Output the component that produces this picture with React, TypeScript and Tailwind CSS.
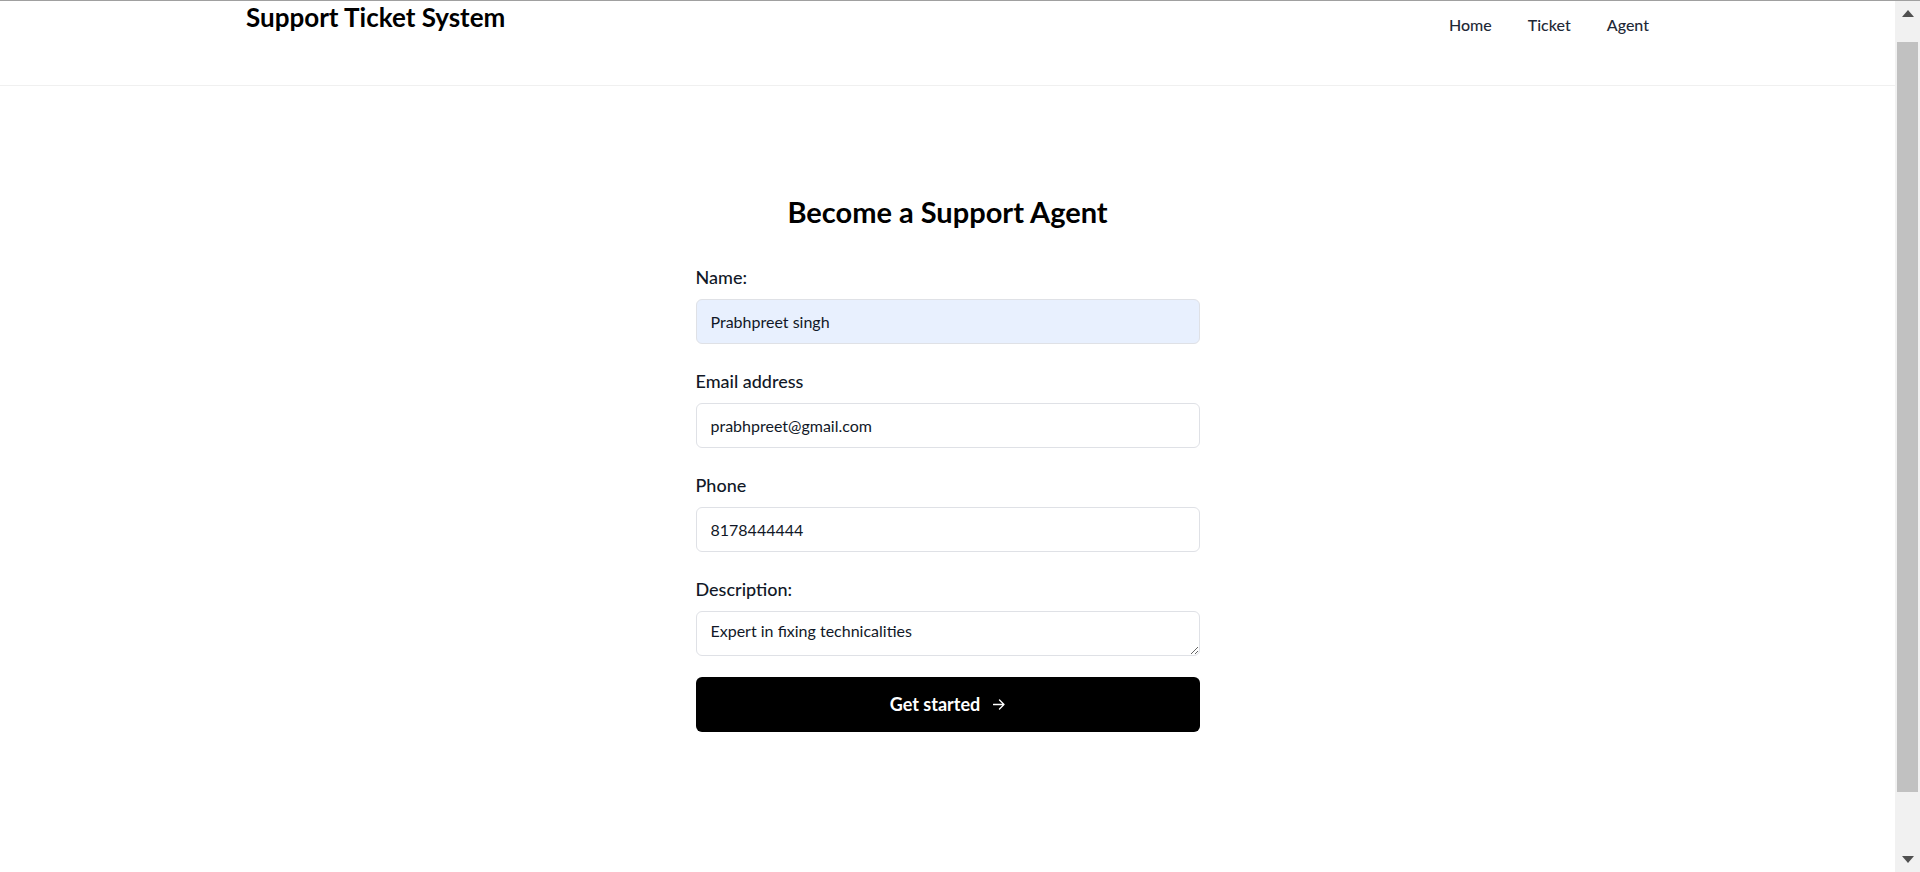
import React from "react";

function Field({
  label,
  value,
  autofill,
}: {
  label: string;
  value: string;
  autofill?: boolean;
}) {
  return (
    <div className="flex flex-col">
      <label className="mb-2 text-[18px] leading-[28px] font-medium text-[#111827]">
        {label}
      </label>
      <input
        readOnly
        defaultValue={value}
        className={`h-[45px] w-full rounded-md border border-[#dfe1e6] px-[14px] text-[16px] leading-6 text-[#111827] outline-none ${
          autofill ? "bg-[#e8f0fe]" : "bg-white"
        }`}
      />
    </div>
  );
}

function Scrollbar() {
  return (
    <div className="flex w-[25px] shrink-0 flex-col items-center bg-[#f1f1f1]">
      <div className="flex h-[25px] w-full items-center justify-center">
        <svg width="12" height="7" viewBox="0 0 12 7">
          <polygon points="6,0 12,7 0,7" fill="#505050" />
        </svg>
      </div>
      <div className="mt-[16px] h-[750px] w-[21px] bg-[#c1c1c1]" />
      <div className="flex-1" />
      <div className="flex h-[25px] w-full items-center justify-center">
        <svg width="12" height="7" viewBox="0 0 12 7">
          <polygon points="0,0 12,0 6,7" fill="#505050" />
        </svg>
      </div>
    </div>
  );
}

export default function App() {
  return (
    <div className="flex h-[872px] w-full flex-col overflow-hidden bg-white font-['Lato','Noto_Sans',sans-serif]">
      <div className="h-px w-full shrink-0 bg-[#a0a0a0]" />
      <div className="flex min-h-0 flex-1">
        <div className="flex min-w-0 flex-1 flex-col">
          <header className="h-[85px] shrink-0 border-b border-[#f0f0f0]">
            <div className="mx-auto flex w-[1403px] items-start justify-between">
              <h1 className="text-[26px] leading-8 font-bold text-black">
                Support Ticket System
              </h1>
              <nav className="mt-3 flex gap-9 text-[16px] leading-6 font-medium text-[#1f2937]">
                <a href="#">Home</a>
                <a href="#">Ticket</a>
                <a href="#">Agent</a>
              </nav>
            </div>
          </header>
          <main className="flex justify-center pt-[108px]">
            <div className="flex w-[504px] flex-col">
              <h2 className="text-center text-[29px] leading-9 font-bold text-black">
                Become a Support Agent
              </h2>
              <form className="mt-[33px] flex flex-col gap-[23px]">
                <Field label="Name:" value="Prabhpreet singh" autofill />
                <Field label="Email address" value="prabhpreet@gmail.com" />
                <Field label="Phone" value="8178444444" />
                <div className="flex flex-col">
                  <label className="mb-2 text-[18px] leading-[28px] font-medium text-[#111827]">
                    Description:
                  </label>
                  <textarea
                    readOnly
                    defaultValue="Expert in fixing technicalities"
                    className="h-[45px] w-full rounded-md border border-[#dfe1e6] bg-white px-[14px] pt-[7px] text-[16px] leading-6 text-[#111827] outline-none"
                  />
                </div>
              </form>
              <button
                type="button"
                className="mt-[21px] flex h-[55px] w-full items-center justify-center gap-[13px] rounded-md bg-black text-[18px] font-bold text-white"
              >
                <span>Get started</span>
                <svg width="12" height="11" viewBox="0 0 12 11" fill="none">
                  <path
                    d="M0.5 5.5H11M6.5 1L11 5.5L6.5 10"
                    stroke="white"
                    strokeWidth="1.3"
                    strokeLinecap="round"
                    strokeLinejoin="round"
                  />
                </svg>
              </button>
            </div>
          </main>
        </div>
        <Scrollbar />
      </div>
    </div>
  );
}
